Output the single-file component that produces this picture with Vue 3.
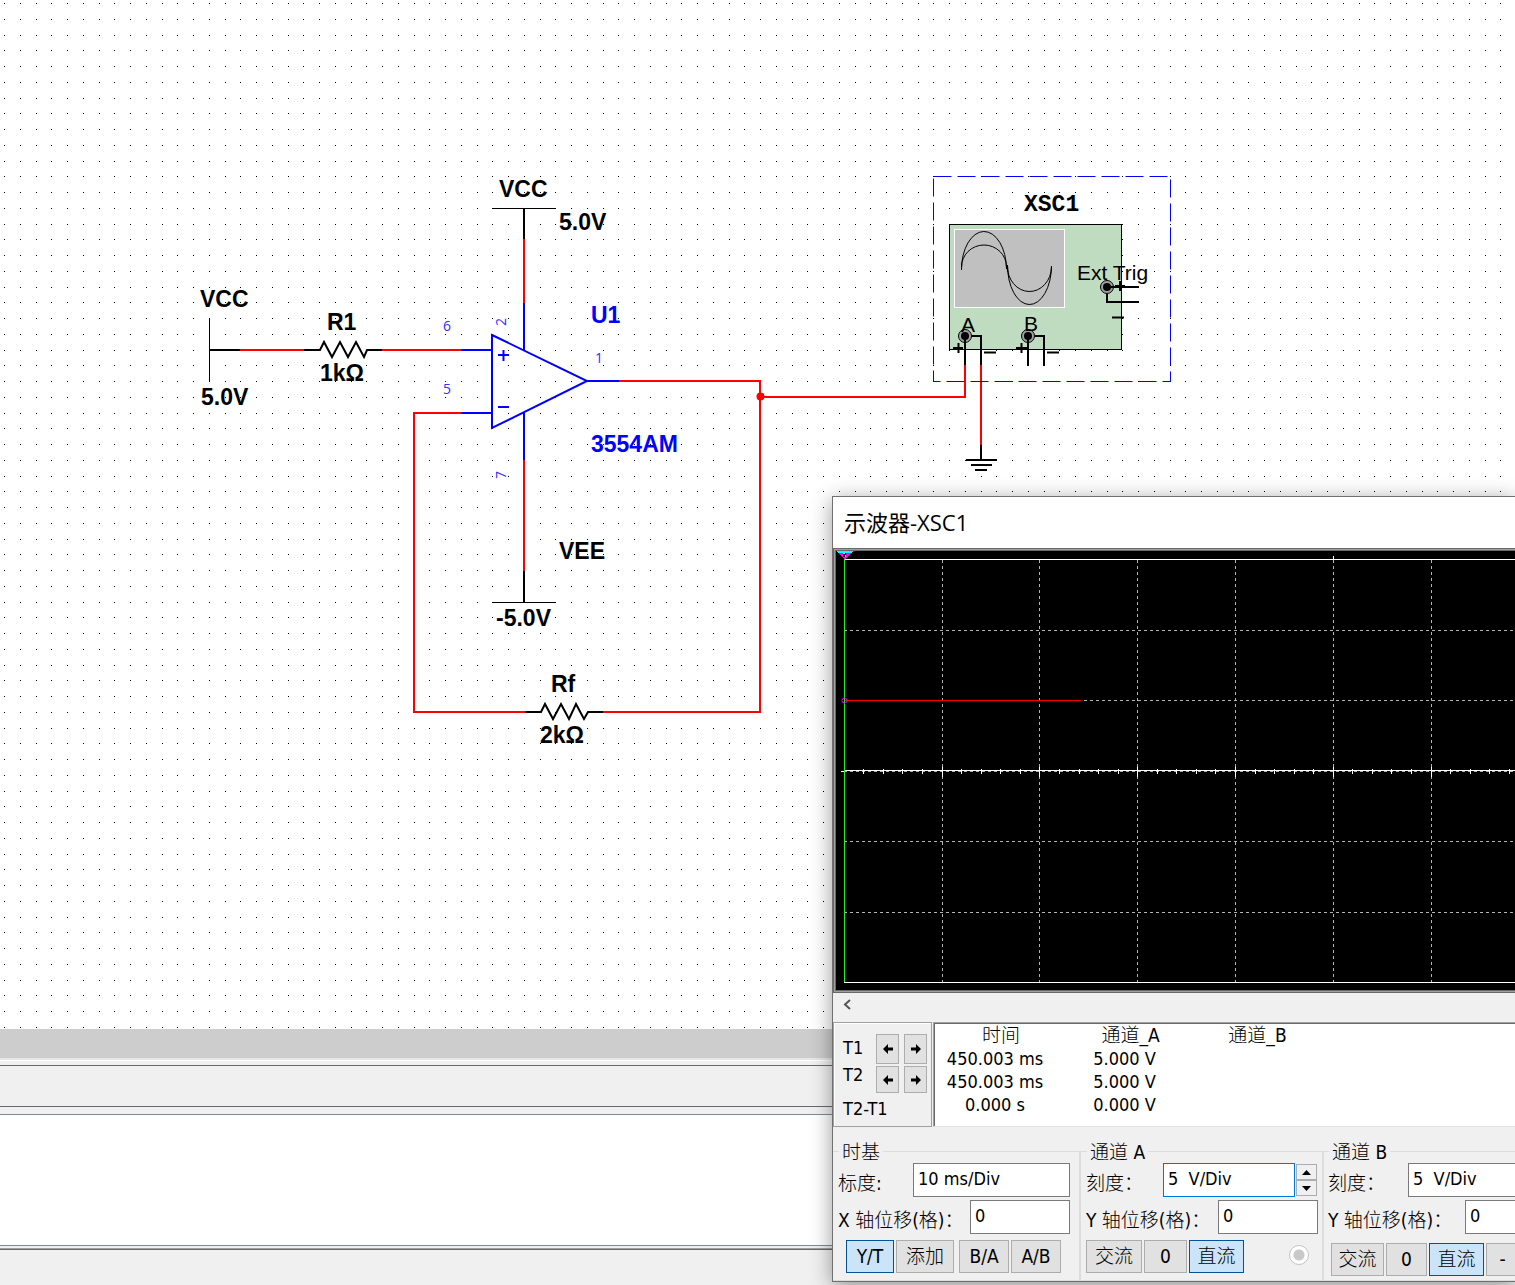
<script setup>
import { ref } from 'vue'

const gridColumns = [106, 203, 301, 399, 497, 595, 692, 790, 888, 986]
const gridRows = [79, 149, 220, 290, 361]
const ticks = Array.from({ length: 60 }, (_, i) => Math.floor(8.3 + (i + 1) * 19.56))

const cursors = ['T1', 'T2']
const readings = ref([
  ['450.003 ms', '5.000 V'],
  ['450.003 ms', '5.000 V'],
  ['0.000 s', '0.000 V'],
])

const timeScale = ref('10 ms/Div')
const timeOffset = ref('0')
const scaleA = ref('5  V/Div')
const offsetA = ref('0')
const scaleB = ref('5  V/Div')
const offsetB = ref('0')
</script>

<template>
  <main class="app">
    <svg class="schematic" role="img" aria-label="Schematic">
      <defs>
        <pattern id="dots" x="4" y="3" width="63" height="63" patternUnits="userSpaceOnUse">
          <g v-for="y in [0, 16, 32, 47]" :key="y">
            <rect v-for="x in [0, 16, 32, 47]" :key="x" :x="x" :y="y" width="1" height="1" />
          </g>
        </pattern>
      </defs>
      <rect width="100%" height="100%" fill="#fff" />
      <rect width="100%" height="100%" fill="url(#dots)" shape-rendering="crispEdges" />

      <g class="wire red">
        <path d="M240 350H304M382 350H461M524 239V303M524 460V571" />
        <path d="M461 413H414V712H525M603 712H760V381H619" />
        <path d="M760 397H965V365M981 365V445" />
      </g>
      <circle cx="760.5" cy="396.5" r="4" fill="#f00" />

      <g class="wire blue">
        <path d="M461 350H492M461 413H492M524 303V350M524 413V460M587 381H619" />
        <path d="M492 335L587 381L492 428Z" />
        <path d="M498 355H509M503.500 350V361M498 407H509" />
      </g>

      <g class="wire black">
        <path d="M210 350H240M304 350H320L324 342L332 357L340 342L348 357L356 342L364 357L367 350H382" />
        <path d="M525 712H541L545 704L553 719L561 704L569 719L576 704L584 719L588 712H603" />
        <path d="M524 209V239M524 571V602" />
        <path d="M981 445V460M966 460H997M971 465H992M975 470H987" />
      </g>
      <path class="thin" d="M209.500 318V381M492 208.500H556M492 602.500H556" />

      <g class="label">
        <text x="200" y="307">VCC</text>
        <text x="201" y="405">5.0V</text>
        <text x="327" y="330">R1</text>
        <text x="320" y="381">1kΩ</text>
        <text x="499" y="197">VCC</text>
        <text x="559" y="230">5.0V</text>
        <text x="559" y="559">VEE</text>
        <text x="496" y="626">-5.0V</text>
        <text x="551" y="692">Rf</text>
        <text x="540" y="743">2kΩ</text>
        <text x="591" y="323" fill="#00f">U1</text>
        <text x="591" y="452" fill="#00f">3554AM</text>
      </g>
      <g class="pin">
        <text x="443" y="331">6</text>
        <text x="443" y="394">5</text>
        <text x="595" y="363">1</text>
        <text transform="translate(506 326) rotate(-90)">2</text>
        <text transform="translate(506 479) rotate(-90)">7</text>
      </g>

      <rect x="933.500" y="176.500" width="237" height="205" fill="none" stroke="#00f" stroke-dasharray="18 6" />
      <text class="instrument" x="1024" y="211">XSC1</text>
      <rect x="949.500" y="224.500" width="172" height="125" fill="#c0dcc0" stroke="#000" />
      <rect x="954.500" y="229.500" width="110" height="78" fill="#c0c0c0" stroke="#fff" />
      <g class="thin">
        <path d="M961.500 270A22.500 38 0 0 1 1006.500 269" />
        <path d="M961.500 267A22.500 22 0 0 1 1006.500 267L1008 272" />
        <path d="M1007.500 265A22 39 0 0 0 1051.500 266" />
        <path d="M1007.500 266A22 25 0 0 0 1051.500 267" />
      </g>
      <g class="terminal">
        <circle cx="965" cy="336" r="6.500" />
        <circle cx="1028" cy="336" r="6.500" />
        <circle cx="1107" cy="287" r="6.500" />
      </g>
      <circle cx="965" cy="336" r="4" />
      <circle cx="1028" cy="336" r="4" />
      <circle cx="1107" cy="287" r="4" />
      <g class="wire black">
        <path d="M965 336V365M972 336H981V365M1028 336V366M1035 336H1044V366" />
        <path d="M1107 287H1139M1107 294V302H1139" />
      </g>
      <g class="wire black">
        <path d="M953 348H963M958.500 343V353M984 352.500H996" />
        <path d="M1016 348H1027M1021.500 343V353M1047 352.500H1059" />
        <path d="M1115 286H1125M1120 281V291M1112 317.500H1124" />
      </g>
      <g class="terminal-label">
        <text x="961" y="332">A</text>
        <text x="1024" y="331">B</text>
        <text x="1077" y="280">Ext Trig</text>
      </g>
    </svg>

    <div class="workspace-edge"></div>
    <div class="tab-strip"></div>
    <div class="log-panel"></div>
    <div class="status-bar"></div>

    <section class="window" aria-label="示波器-XSC1">
      <header class="title">示波器-XSC1</header>

      <div class="screen">
        <svg class="trace" role="img" aria-label="Channel A trace" shape-rendering="crispEdges">
          <g stroke="#b4b4b4" stroke-dasharray="3 3">
            <line v-for="x in gridColumns" :key="x" :x1="x + 0.5" :x2="x + 0.5" y1="9" y2="431" />
            <line v-for="y in gridRows" :key="y" x1="8" x2="100%" :y1="y + 0.5" :y2="y + 0.5" />
          </g>
          <g stroke="#fff">
            <line x1="8" x2="100%" y1="8.5" y2="8.5" />
            <line x1="8" x2="100%" y1="431.5" y2="431.5" />
            <line x1="8" x2="100%" y1="219.5" y2="219.5" />
            <line x1="5" x2="9" y1="220.5" y2="220.5" />
            <line v-for="x in ticks" :key="x" :x1="x + 0.5" :x2="x + 0.5" y1="218" y2="223" />
            <line v-for="x in gridColumns" :key="x" :x1="x + 0.5" :x2="x + 0.5" y1="216" y2="226" />
            <line x1="497.5" x2="497.5" y1="5" y2="9" />
          </g>
          <line x1="8.5" x2="8.5" y1="8" y2="431" stroke="#20f020" />
          <line x1="9" x2="245" y1="149.5" y2="149.5" stroke="#f00000" />
          <circle cx="8.5" cy="149.5" r="2.5" fill="none" stroke="#f0f" shape-rendering="geometricPrecision" />
          <path d="M0 0H17L15 2H2Z" fill="#0ff" />
          <path d="M2 2H15L9 8H8Z" fill="#f0f" />
          <path d="M7 2H10V6H7Z" />
          <path d="M7 2H9V3H7Z" fill="#ff0" />
          <path d="M9 4H10V6H9Z" fill="#0ff" />
        </svg>
      </div>

      <div class="scroll">
        <button type="button" aria-label="Scroll left">
          <svg width="9" height="11"><path d="M7 1L2 5.500L7 10" fill="none" stroke="#555" stroke-width="2" /></svg>
        </button>
      </div>

      <div class="readout">
        <div class="cursors">
          <div v-for="name in cursors" :key="name" class="cursor">
            <span>{{ name }}</span>
            <button type="button" :aria-label="name + ' left'">
              <svg width="11" height="10"><path d="M1 5L6 0V3.500H11V6.500H6V10Z" /></svg>
            </button>
            <button type="button" :aria-label="name + ' right'">
              <svg width="11" height="10"><path d="M11 5L6 0V3.500H1V6.500H6V10Z" /></svg>
            </button>
          </div>
          <div class="difference">T2-T1</div>
        </div>
        <div class="values">
          <table>
            <thead>
              <tr><th>时间</th><th>通道_A</th><th>通道_B</th></tr>
            </thead>
            <tbody>
              <tr v-for="(row, i) in readings" :key="i">
                <td>{{ row[0] }}</td><td>{{ row[1] }}</td><td></td>
              </tr>
            </tbody>
          </table>
        </div>
      </div>

      <div class="groups">
        <fieldset class="timebase">
          <legend>时基</legend>
          <div class="row">
            <label for="time-scale">标度:</label>
            <input id="time-scale" v-model="timeScale" class="wide" type="text">
          </div>
          <div class="row">
            <label for="time-offset">X 轴位移(格)：</label>
            <input id="time-offset" v-model="timeOffset" type="text">
          </div>
          <div class="buttons inset">
            <button type="button" class="on w48">Y/T</button>
            <button type="button" class="w58">添加</button>
            <button type="button" class="w50 apart">B/A</button>
            <button type="button" class="w50">A/B</button>
          </div>
        </fieldset>

        <fieldset class="channel-a">
          <legend>通道 A</legend>
          <div class="row">
            <label for="scale-a">刻度：</label>
            <input id="scale-a" v-model="scaleA" class="active" type="text">
            <span class="spinner">
              <button type="button" aria-label="Increase"><svg width="9" height="5"><path d="M0 5L4.500 0L9 5Z" /></svg></button>
              <button type="button" aria-label="Decrease"><svg width="9" height="5"><path d="M0 0L4.500 5L9 0Z" /></svg></button>
            </span>
          </div>
          <div class="row">
            <label for="offset-a">Y 轴位移(格)：</label>
            <input id="offset-a" v-model="offsetA" type="text">
          </div>
          <div class="buttons">
            <button type="button" class="w56">交流</button>
            <button type="button" class="w43">0</button>
            <button type="button" class="on w55">直流</button>
            <input class="probe" type="radio" checked aria-label="通道 A">
          </div>
        </fieldset>

        <fieldset class="channel-b">
          <legend>通道 B</legend>
          <div class="row">
            <label for="scale-b">刻度：</label>
            <input id="scale-b" v-model="scaleB" class="wide" type="text">
          </div>
          <div class="row">
            <label for="offset-b">Y 轴位移(格)：</label>
            <input id="offset-b" v-model="offsetB" type="text">
          </div>
          <div class="buttons lower">
            <button type="button" class="w53">交流</button>
            <button type="button" class="w41">0</button>
            <button type="button" class="on w55">直流</button>
            <button type="button" class="w33">-</button>
          </div>
        </fieldset>
      </div>
    </section>
  </main>
</template>

<style>
body {
  margin: 0;
  overflow-x: hidden;
}
</style>

<style scoped>
* {
  box-sizing: border-box;
}

.app {
  position: relative;
  display: flex;
  flex-direction: column;
  min-height: 100vh;
  overflow: hidden;
  background: #f0f0f0;
  color: #000;
  font: 18px/23px "DejaVu Sans Condensed", "Open Sans", "Noto Sans CJK SC", sans-serif;
}

/* Schematic canvas */
.schematic {
  display: block;
  flex: none;
  width: 100%;
  height: 1029px;
}
.wire {
  fill: none;
  stroke-width: 2;
}
.red { stroke: #f00; }
.blue { stroke: #00f; }
.black { stroke: #000; }
.thin {
  fill: none;
  stroke: #000;
  stroke-width: 1;
}
.label {
  font: bold 23px "Liberation Sans", Arial, sans-serif;
}
.pin {
  fill: #3030ff;
  font: 14px "Open Sans", sans-serif;
}
.instrument {
  font: bold 23px "Liberation Mono", "Courier New", monospace;
}
.terminal {
  fill: #a0a0a4;
  stroke: #000;
}
.terminal-label {
  font: 21px "Liberation Sans", Arial, sans-serif;
}

/* Docked panels */
.workspace-edge {
  height: 31px;
  background: #cdcdcd;
  border-bottom: 2px solid #e6e6e6;
  box-shadow: 0 1px #fff;
}
.tab-strip {
  height: 42px;
  margin-top: 5px;
  border: solid #696969;
  border-width: 1px 0;
}
.log-panel {
  height: 132px;
  margin-top: 7px;
  background: #fff;
  border: solid #828790;
  border-width: 1px 0;
}
.status-bar {
  margin-top: 2px;
  height: 37px;
  border-top: 1px solid #a0a0a0;
  box-shadow: inset 0 1px #696969;
}

/* Oscilloscope window */
.window {
  position: absolute;
  top: 496px;
  left: 832px;
  right: 0;
  background: #f0f0f0;
  border: 1px solid #707070;
  border-right: 0;
  box-shadow: 0 4px 20px rgba(0, 0, 0, 0.4);
}
.title {
  height: 51px;
  padding-left: 11px;
  background: #fff;
  font: 22px/50px "Open Sans", "Noto Sans CJK SC", sans-serif;
}
.screen {
  border: 3px double #696969;
  border-right: 0;
  background: #a0a0a0;
}
.trace {
  display: block;
  width: 100%;
  height: 439px;
  background: #000;
}
button {
  display: flex;
  align-items: center;
  justify-content: center;
  padding: 0;
  border: 1px solid #adadad;
  background: #e1e1e1;
  color: #000;
  font: inherit;
  font-weight: 300;
}
.scroll {
  height: 29px;
}
.scroll button {
  width: 29px;
  height: 22px;
  border: 0;
  background: none;
}
.readout {
  display: flex;
  gap: 1px;
}
.cursors {
  display: flex;
  flex-direction: column;
  gap: 2px;
  width: 99px;
  height: 105px;
  padding: 11px 4px 0 9px;
  border: 1px solid #a0a0a0;
  box-shadow: inset 1px 1px #fff;
}
.cursor {
  display: grid;
  grid-template-columns: 28px 23px 23px;
  column-gap: 5px;
  height: 30px;
  line-height: 28px;
}
.cursor + .cursor {
  height: 27px;
  line-height: 18px;
}
.difference {
  line-height: 28px;
}
.values {
  flex: 1;
  border-top: 1px solid #a0a0a0;
  border-left: 1px solid #a0a0a0;
  border-bottom: 1px solid #e3e3e3;
  background: #fff;
  box-shadow: inset 1px 1px #696969;
}
table {
  width: 376px;
  table-layout: fixed;
  border-collapse: collapse;
  margin-top: 1px;
}
th, td {
  height: 23px;
  padding: 0;
  text-align: center;
  font-weight: 300;
}
th {
  padding-left: 12px;
  font-size: 19px;
}
th:nth-child(1) { width: 122px; }
th:nth-child(2) { width: 137px; }

.groups {
  display: flex;
  padding-top: 14px;
  overflow: hidden;
}
fieldset {
  flex: none;
  min-width: 0;
  height: 140px;
  margin: 0;
  padding: 0 4px 0 5px;
  border: solid #dcdcdc;
  border-width: 1px 2px 1px 0;
}
.timebase {
  width: 248px;
  padding-right: 9px;
}
.channel-a { width: 243px; }
.channel-b {
  width: 243px;
  padding-right: 0;
  padding-left: 4px;
}
legend {
  height: 20px;
  margin-left: 1px;
  padding: 0 3px;
  font-size: 19px;
  font-weight: 300;
  line-height: 22px;
}
.row {
  display: flex;
  height: 34px;
  margin: 2px 0 3px;
}
.row label {
  flex: 1;
  padding-top: 9px;
  font-size: 19px;
  font-weight: 300;
  white-space: nowrap;
}
input[type="text"] {
  width: 100px;
  height: 34px;
  padding: 0 4px 4px;
  border: 1px solid #7a7a7a;
  border-radius: 0;
  background: #fff;
  color: #000;
  font: inherit;
  white-space: pre;
}
input.wide { width: 157px; }
input.active {
  width: 132px;
  border-color: #0078d7;
}
.spinner {
  display: flex;
  flex-direction: column;
  width: 23px;
  padding: 1px;
}
.spinner button {
  flex: 1;
  background: #f0f0f0;
}
.buttons {
  display: flex;
  gap: 2px;
  height: 33px;
}
.row + .buttons { margin-top: 6px; }
.row + .inset { padding-left: 8px; }
.row + .lower {
  margin-top: 9px;
  padding-left: 3px;
}
.buttons button {
  flex: none;
  font-size: 19px;
}
.apart { margin-left: 3px; }
button.on {
  border-color: #00549b;
  background: #cce4f7;
}
.w33 { width: 33px; }
.w41 { width: 41px; }
.w43 { width: 43px; }
.w48 { width: 48px; }
.w50 { width: 50px; }
.w53 { width: 53px; }
.w55 { width: 55px; }
.w56 { width: 56px; }
.w58 { width: 58px; }
.probe {
  appearance: none;
  width: 20px;
  height: 20px;
  margin: 5px 9px 0 auto;
  border: 1px solid #c4c4c4;
  border-radius: 50%;
  background: radial-gradient(circle, #c8c8c8 5px, #fff 6px);
}
</style>
